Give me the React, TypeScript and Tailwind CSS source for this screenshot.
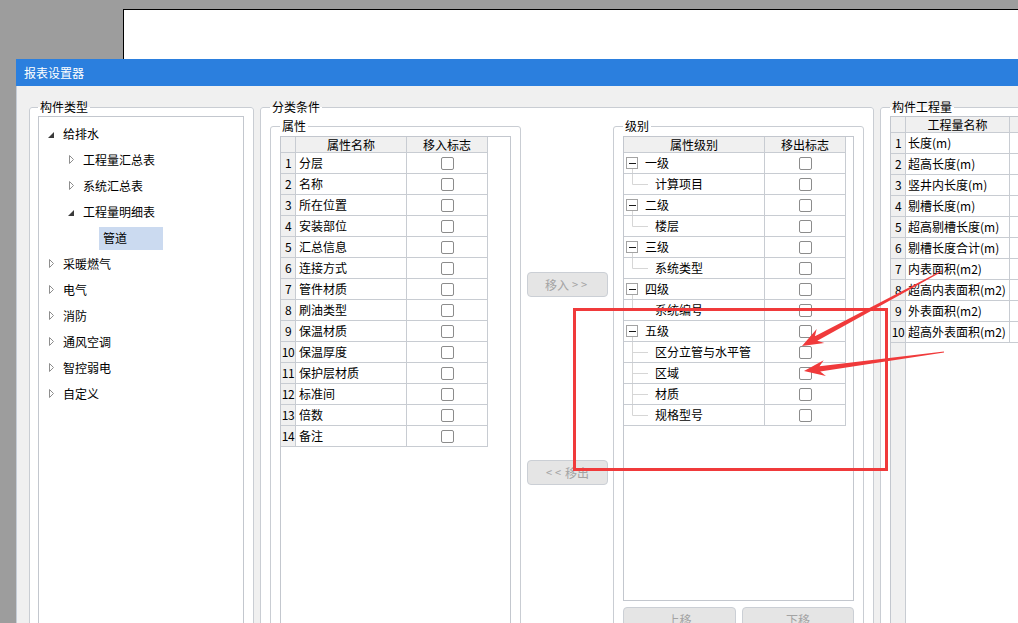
import type { ReactNode } from 'react';

const attrRows = ['分层', '名称', '所在位置', '安装部位', '汇总信息', '连接方式', '管件材质', '刷油类型', '保温材质', '保温厚度', '保护层材质', '标准间', '倍数', '备注'];

const levels = [
    { name: '一级', children: ['计算项目'] },
    { name: '二级', children: ['楼层'] },
    { name: '三级', children: ['系统类型'] },
    { name: '四级', children: ['系统编号'] },
    { name: '五级', children: ['区分立管与水平管', '区域', '材质', '规格型号'] },
];

const quantities = ['长度(m)', '超高长度(m)', '竖井内长度(m)', '剔槽长度(m)', '超高剔槽长度(m)', '剔槽长度合计(m)', '内表面积(m2)', '超高内表面积(m2)', '外表面积(m2)', '超高外表面积(m2)'];

type TreeItem = { label: string; depth: 0 | 1 | 2; icon: 'open' | 'closed' | 'none'; selected?: boolean };

const tree: TreeItem[] = [
    { label: '给排水', depth: 0, icon: 'open' },
    { label: '工程量汇总表', depth: 1, icon: 'closed' },
    { label: '系统汇总表', depth: 1, icon: 'closed' },
    { label: '工程量明细表', depth: 1, icon: 'open' },
    { label: '管道', depth: 2, icon: 'none', selected: true },
    { label: '采暖燃气', depth: 0, icon: 'closed' },
    { label: '电气', depth: 0, icon: 'closed' },
    { label: '消防', depth: 0, icon: 'closed' },
    { label: '通风空调', depth: 0, icon: 'closed' },
    { label: '智控弱电', depth: 0, icon: 'closed' },
    { label: '自定义', depth: 0, icon: 'closed' },
];

function Group({ title, legendClass, className, children }: { title: string; legendClass: string; className: string; children: ReactNode }) {
    return (
        <fieldset className={`min-w-0 shrink-0 border border-[#c9cdd3] rounded-[3px] bg-white ${className}`}>
            <legend className={`px-[2px] leading-[16px] ${legendClass}`}>{title}</legend>
            {children}
        </fieldset>
    );
}

function Check() {
    return <span className="block w-[13px] h-[13px] rounded-[2px] border border-[#8c8c8c] bg-white" />;
}

function Btn({ children, className }: { children: ReactNode; className: string }) {
    return (
        <div className={`h-[25px] rounded-[4px] border border-[#cbcfd5] bg-[#e5e5e5] text-[#a3a3a3] flex items-center justify-center ${className}`}>
            {children}
        </div>
    );
}

function TreeIcon({ kind }: { kind: TreeItem['icon'] }) {
    if (kind === 'open') {
        return (
            <svg width="6" height="6" className="mt-[1px]">
                <path d="M6 0V6H0Z" fill="#3a3a3a" />
            </svg>
        );
    }
    if (kind === 'closed') {
        return (
            <svg width="6" height="10" className="ml-[1px]">
                <path d="M0.5 0.5L4.5 4.5L0.5 8.5Z" fill="white" stroke="#8e8e8e" />
            </svg>
        );
    }
    return null;
}

// tapered red arrow, like a screenshot annotation tool draws
function arrowPoints(tx: number, ty: number, hx: number, hy: number) {
    const dx = hx - tx;
    const dy = hy - ty;
    const len = Math.hypot(dx, dy);
    const ux = dx / len;
    const uy = dy / len;
    const nx = -uy;
    const ny = ux;
    const headLen = 21;
    const headW = 8;
    const neck = 16;
    const neckW = 2.6;
    const tailW = 0.4;
    const bx = hx - ux * headLen;
    const by = hy - uy * headLen;
    const kx = hx - ux * neck;
    const ky = hy - uy * neck;
    const pts = [
        [tx + nx * tailW, ty + ny * tailW],
        [kx + nx * neckW, ky + ny * neckW],
        [bx + nx * headW, by + ny * headW],
        [hx, hy],
        [bx - nx * headW, by - ny * headW],
        [kx - nx * neckW, ky - ny * neckW],
        [tx - nx * tailW, ty - ny * tailW],
    ];
    return pts.map(p => `${p[0].toFixed(1)},${p[1].toFixed(1)}`).join(' ');
}

const line = 'border-[#c8ccd2]';

export default function App() {
    return (
        <div className="relative w-[1018px] h-[623px] overflow-hidden bg-[#9d9d9d] font-['Noto_Sans_CJK_SC',sans-serif] text-[12px] text-black">
            {/* window behind the dialog */}
            <div className="absolute left-[123px] top-[9px] w-[900px] h-[60px] bg-white border-t border-l border-black" />

            {/* dialog */}
            <div className="absolute left-[16px] top-[59px] w-[1010px] h-[600px] flex flex-col">
                <div className="h-[27px] shrink-0 bg-[#2b7fde] text-white pl-[8px] flex items-center leading-none">报表设置器</div>
                <div className="flex-1 bg-[#f0f0f0] border-l border-[#c5ccd6] pl-[12px] pt-[13px] flex items-start gap-[6px]">
                    {/* 构件类型 */}
                    <Group title="构件类型" legendClass="ml-[8px]" className="w-[225px] h-[560px]">
                        <div className="ml-[8px] mt-[1px] w-[206px] h-[530px] border border-[#c3c7ce] bg-white pt-[4px]">
                            {tree.map(item => (
                                <div
                                    key={item.label}
                                    className={`h-[26px] flex items-center ${item.depth === 0 ? 'pl-[9px]' : item.depth === 1 ? 'pl-[29px]' : 'pl-[60px]'}`}
                                >
                                    {item.icon !== 'none' && (
                                        <span className="w-[15px] shrink-0 flex items-center">
                                            <TreeIcon kind={item.icon} />
                                        </span>
                                    )}
                                    {item.selected ? (
                                        <span className="w-[64px] h-[23px] bg-[#cbdaf0] pl-[4px] flex items-center">{item.label}</span>
                                    ) : (
                                        <span>{item.label}</span>
                                    )}
                                </div>
                            ))}
                        </div>
                    </Group>

                    {/* 分类条件 */}
                    <Group title="分类条件" legendClass="ml-[9px]" className="w-[614px] h-[560px]">
                        <div className="flex items-start pl-[9px] pt-[3px]">
                            {/* 属性 */}
                            <Group title="属性" legendClass="ml-[9px]" className="w-[251px] h-[520px]">
                                <div className="ml-[9px] mt-[2px] w-[231px] h-[490px] border border-[#c3c7ce] bg-white">
                                    <div className={`flex w-[207px] h-[16px] bg-[#f0f0f0] border-b ${line}`}>
                                        <div className={`w-[15px] border-r ${line}`} />
                                        <div className={`w-[111px] border-r ${line} flex items-center justify-center leading-none`}>属性名称</div>
                                        <div className={`w-[81px] border-r ${line} flex items-center justify-center leading-none`}>移入标志</div>
                                    </div>
                                    {attrRows.map((r, i) => (
                                        <div key={r} className="flex h-[21px]">
                                            <div className={`w-[15px] bg-[#f0f0f0] border-r border-b ${line} flex items-center justify-center leading-none tracking-[-0.5px]`}>{i + 1}</div>
                                            <div className={`w-[111px] border-r border-b ${line} flex items-center pl-[3px] leading-none`}>{r}</div>
                                            <div className={`w-[81px] border-r border-b ${line} flex items-center justify-center`}>
                                                <Check />
                                            </div>
                                        </div>
                                    ))}
                                </div>
                            </Group>

                            {/* move buttons */}
                            <div className="w-[92px] shrink-0 flex flex-col pl-[6px]">
                                <Btn className="w-[81px] mt-[154px]">
                                    移入<span className="ml-[3px] tracking-[3px] text-[11px]">&gt;&gt;</span>
                                </Btn>
                                <Btn className="w-[81px] mt-[163px]">
                                    <span className="mr-[1px] tracking-[3px] text-[11px]">&lt;&lt;</span>移出
                                </Btn>
                            </div>

                            {/* 级别 */}
                            <Group title="级别" legendClass="ml-[9px]" className="w-[251px] h-[520px]">
                                <div className="ml-[9px] mt-[2px] w-[231px] h-[465px] border border-[#c3c7ce] bg-white">
                                    <div className="flex h-[16px]">
                                        <div className={`w-[141px] bg-[#f0f0f0] border-r border-b ${line} flex items-center justify-center leading-none`}>属性级别</div>
                                        <div className={`w-[81px] bg-[#f0f0f0] border-r border-b ${line} flex items-center justify-center leading-none`}>移出标志</div>
                                    </div>
                                    {levels.map(lv => (
                                        <div key={lv.name}>
                                            <div className="flex h-[21px]">
                                                <div className={`w-[141px] border-r border-b ${line} flex items-center leading-none`}>
                                                    <svg width="21" height="20" className="shrink-0">
                                                        <path d="M8.5 16V20" stroke="#d6d6d6" />
                                                        <rect x="2.5" y="4.5" width="11" height="11" fill="white" stroke="#a3a3a3" />
                                                        <path d="M5 10.5H12" stroke="#1a1a1a" />
                                                    </svg>
                                                    {lv.name}
                                                </div>
                                                <div className={`w-[81px] border-r border-b ${line} flex items-center justify-center`}>
                                                    <Check />
                                                </div>
                                            </div>
                                            {lv.children.map((c, ci) => (
                                                <div key={c} className="flex h-[21px]">
                                                    <div className={`w-[141px] border-r border-b ${line} flex items-center leading-none`}>
                                                        <svg width="31" height="20" className="shrink-0">
                                                            <path d={ci === lv.children.length - 1 ? 'M8.5 0V10.5H24' : 'M8.5 0V20M8.5 10.5H24'} stroke="#d6d6d6" fill="none" />
                                                        </svg>
                                                        {c}
                                                    </div>
                                                    <div className={`w-[81px] border-r border-b ${line} flex items-center justify-center`}>
                                                        <Check />
                                                    </div>
                                                </div>
                                            ))}
                                        </div>
                                    ))}
                                </div>
                                <div className="ml-[9px] mt-[6px] flex gap-[6px]">
                                    <Btn className="w-[113px]">上移</Btn>
                                    <Btn className="w-[112px]">下移</Btn>
                                </div>
                            </Group>
                        </div>
                    </Group>

                    {/* 构件工程量 */}
                    <Group title="构件工程量" legendClass="ml-[9px]" className="w-[200px] h-[560px]">
                        <div className="ml-[9px] mt-[1px] w-[200px] h-[520px] border border-[#c3c7ce] bg-white flex flex-col">
                            <div className={`flex h-[16px] shrink-0 bg-[#f0f0f0] border-b ${line}`}>
                                <div className={`w-[15px] border-r ${line}`} />
                                <div className={`w-[104px] border-r ${line} flex items-center justify-center leading-none`}>工程量名称</div>
                                <div className="flex-1" />
                            </div>
                            {quantities.map((q, i) => (
                                <div key={q} className="flex h-[21px] shrink-0">
                                    <div className={`w-[15px] bg-[#f0f0f0] border-r border-b ${line} flex items-center justify-center leading-none tracking-[-0.5px]`}>{i + 1}</div>
                                    <div className={`w-[104px] border-r border-b ${line} flex items-center pl-[2px] leading-none whitespace-nowrap`}>{q}</div>
                                    <div className={`flex-1 border-b ${line}`} />
                                </div>
                            ))}
                            <div className="flex-1 flex">
                                <div className={`w-[15px] bg-[#f0f0f0] border-r ${line}`} />
                            </div>
                        </div>
                    </Group>
                </div>
            </div>

            {/* red annotations */}
            <svg className="absolute inset-0 pointer-events-none" width="1018" height="623">
                <rect x="574.5" y="309.5" width="312" height="160" fill="none" stroke="#f03a3b" strokeWidth="3" />
                <polygon points={arrowPoints(942, 271, 802, 346)} fill="#f03a3b" />
                <polygon points={arrowPoints(944, 352, 804, 371)} fill="#f03a3b" />
            </svg>
        </div>
    );
}
